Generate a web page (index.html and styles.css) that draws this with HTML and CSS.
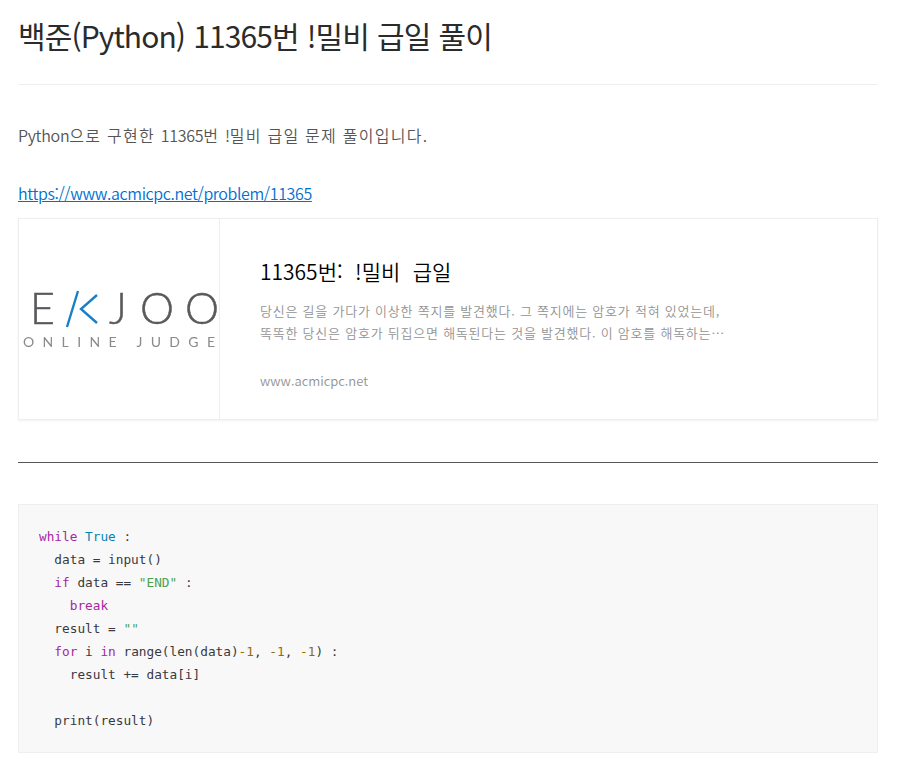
FILE: index.html
```html
<!DOCTYPE html>
<html lang="ko">
<head>
<meta charset="utf-8">
<title>백준(Python) 11365번 !밀비 급일 풀이</title>
<link rel="stylesheet" href="styles.css">
</head>
<body>
<main class="post">
  <h1 class="title">백준(Python) 11365번 !밀비 급일 풀이</h1>
  <p class="intro"><span class="lat">Python</span>으로 구현한 <span class="lat">11365</span>번 <span class="lat">!</span>밀비 급일 문제 풀이입니다.</p>
  <p class="source"><a href="#">https://www.acmicpc.net/problem/11365</a></p>
  <a class="card" href="#">
    <div class="thumb">
      <svg class="logo" width="200" height="200" viewBox="0 0 200 200">
        <text class="logo-main" x="11" y="105">E</text>
        <path class="logo-k" d="M59 72 L48 108 M78 76 L62 90 L78 104" />
        <text class="logo-main" x="90" y="105">J</text>
        <text class="logo-main" x="121" y="105">O</text>
        <text class="logo-main" x="166" y="105">O</text>
        <text class="logo-sub" x="4" y="128" textLength="192">ONLINE JUDGE</text>
      </svg>
    </div>
    <div class="card-body">
      <div class="card-title">11365번: !밀비 급일</div>
      <div class="card-desc">당신은 길을 가다가 이상한 쪽지를 발견했다. 그 쪽지에는 암호가 적혀 있었는데,<br>똑똑한 당신은 암호가 뒤집으면 해독된다는 것을 발견했다. 이 암호를 해독하는…</div>
      <div class="card-host">www.acmicpc.net</div>
    </div>
  </a>
  <hr class="rule">
  <pre class="code"><code><span class="kw">while</span> <span class="lit">True</span> :
  data = input()
  <span class="kw">if</span> data == <span class="str">"END"</span> :
    <span class="kw">break</span>
  result = <span class="str">""</span>
  <span class="kw">for</span> i <span class="kw">in</span> range(len(data)<span class="num">-1</span>, <span class="num">-1</span>, <span class="num">-1</span>) :
    result += data[i]

  print(result)</code></pre>
</main>
</body>
</html>
```
FILE: styles.css
```css
* { box-sizing: border-box; }
html, body { margin: 0; padding: 0; background: #fff; }
body {
  font-family: "Noto Sans CJK KR", "Noto Sans", sans-serif;
  color: #555;
  height: 775px;
  overflow: hidden;
}
.post { width: 860px; margin-left: 18px; }
.title {
  margin: 0;
  height: 85px;
  padding-top: 12px;
  border-bottom: 1px solid #efefef;
  font-size: 30px;
  font-weight: 400;
  line-height: 46px;
  color: #2b2b2b;
  letter-spacing: -0.9px;
  word-spacing: 0.6px;
}
.intro {
  margin: 38px 0 0;
  font-size: 16px;
  line-height: 24px;
  font-weight: 350;
  color: #555;
  letter-spacing: 1.27px;
}
.lat { letter-spacing: -0.3px; }
.source { margin: 34px 0 0; font-size: 16px; line-height: 24px; letter-spacing: -0.38px; }
.source a { color: #0070d1; font-weight: 350; }
.card {
  display: flex;
  height: 202px;
  margin-top: 13px;
  border: 1px solid #eee;
  box-shadow: 0 1px 2px rgba(0, 0, 0, 0.06);
  text-decoration: none;
}
.thumb { flex: 0 0 201px; border-right: 1px solid #eee; overflow: hidden; }
.logo { display: block; filter: blur(0.3px); }
.logo-main { font-family: "Lato", sans-serif; font-weight: 300; font-size: 43px; fill: #58595b; stroke: #58595b; stroke-width: 0.5; }
.logo-k { fill: none; stroke: #1a7fc4; stroke-width: 2.4; }
.logo-sub { font-family: "Lato", sans-serif; font-weight: 400; font-size: 14px; fill: #8a8a8a; }
.card-body { padding: 36px 40px 0; min-width: 0; }
.card-title { font-size: 21px; line-height: 32px; color: #000; font-weight: 350; word-spacing: 6.5px; }
.card-desc { margin-top: 13px; font-size: 13px; line-height: 22px; color: #939393; font-weight: 350; white-space: nowrap; letter-spacing: 0.77px; }
.card-host { margin-top: 26px; font-size: 13px; line-height: 21px; color: #939393; font-weight: 350; }
.rule { margin: 42px 0 0; border: 0; border-top: 1px solid #555; }
.code {
  margin: 41px 0 0;
  height: 249px;
  padding: 20px;
  background: #f8f8f8;
  border: 1px solid #eee;
  font-family: "DejaVu Sans Mono", monospace;
  font-size: 12.75px;
  line-height: 23px;
  color: #383a42;
}
.code code { font: inherit; }
.kw { color: #a626a4; }
.lit { color: #0184bb; }
.str { color: #50a14f; }
.num { color: #986801; }
```
